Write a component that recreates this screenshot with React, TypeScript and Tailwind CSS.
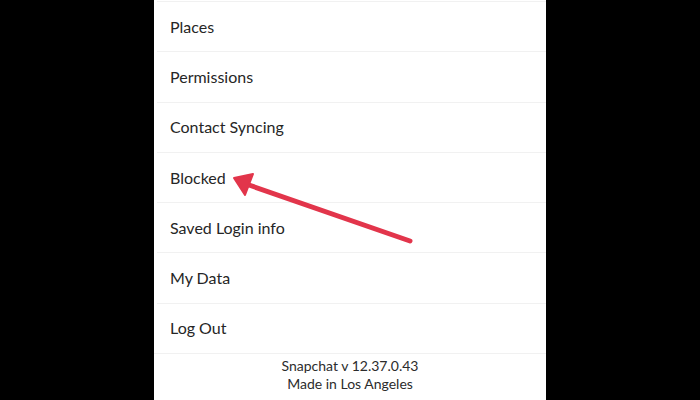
const ROWS = [
  'Places',
  'Permissions',
  'Contact Syncing',
  'Blocked',
  'Saved Login info',
  'My Data',
  'Log Out',
];

function Arrow() {
  // red annotation arrow pointing at "Blocked"
  return (
    <svg
      className="pointer-events-none absolute left-0 top-0"
      width="700"
      height="400"
      viewBox="0 0 700 400"
    >
      <line x1="410" y1="241" x2="246" y2="184" stroke="#e2354b" strokeWidth="5" strokeLinecap="round" />
      <polygon points="234,178 253,174 245,195" fill="#e2354b" stroke="#e2354b" strokeWidth="2" strokeLinejoin="round" />
    </svg>
  );
}

export default function App() {
  return (
    <div className="relative flex h-[400px] w-[700px] justify-center overflow-hidden bg-black font-['Lato','Liberation_Sans',sans-serif]">
      <div className="flex w-[392px] flex-col bg-white">
        <div className="h-[1px]" />
        {ROWS.map((label) => (
          <div
            key={label}
            className="ml-[3px] flex h-[50.3px] items-center border-t border-[#f1f1f1] pl-[13px] text-[16px] text-[#262626]"
          >
            {label}
          </div>
        ))}
        <div className="flex flex-col items-center border-t border-[#f1f1f1] pt-[3px] text-[14px] leading-[18px] text-[#2c2c2c]">
          <span>Snapchat v 12.37.0.43</span>
          <span>Made in Los Angeles</span>
        </div>
      </div>
      <Arrow />
    </div>
  );
}
